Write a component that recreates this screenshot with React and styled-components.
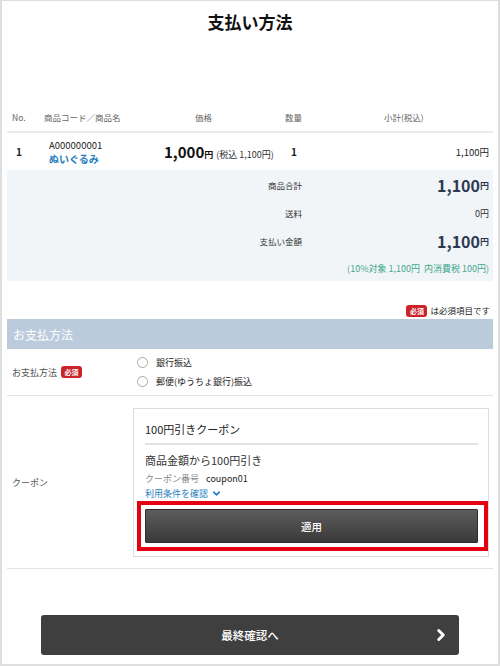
import React from "react";
import styled, { createGlobalStyle } from "styled-components";
import { ChevronDown, ChevronRight } from "lucide-react";

const Global = createGlobalStyle`
  html, body { margin: 0; padding: 0; background: #fff; }
  body { font-family: "Noto Sans CJK JP", "Noto Sans", sans-serif; color: #333; }
  * { box-sizing: border-box; }
`;

const Frame = styled.div`
  width: 500px;
  height: 666px;
  border: 2px solid #dedede;
  border-top-width: 1px;
  background: #fff;
  padding: 0 5px;
  display: flex;
  flex-direction: column;
  overflow: hidden;
`;

const Title = styled.h1`
  margin: 0;
  padding-top: 9px;
  height: 102px;
  text-align: center;
  font-size: 17px;
  line-height: 24px;
  font-weight: 700;
  color: #111;
`;

const TableRow = styled.div`
  display: grid;
  grid-template-columns: 37px 120px 120px 44px 1fr;
  align-items: center;
  height: ${(p) => p.$h}px;
  border-bottom: ${(p) => (p.$line ? "2px solid #ececec" : "none")};
`;

const HeadCell = styled.div`
  font-size: 8.5px;
  color: #666;
  padding-left: ${(p) => p.$pl || 0}px;
  text-align: ${(p) => p.$align || "left"};
  white-space: nowrap;
`;

const Cell = styled.div`
  padding-left: ${(p) => p.$pl || 0}px;
  padding-right: ${(p) => p.$pr || 0}px;
  text-align: ${(p) => p.$align || "left"};
  white-space: nowrap;
  font-size: 9.5px;
  color: #222;
`;

const No = styled.span`
  font-weight: 700;
  font-size: 10px;
  color: #222;
`;

const Code = styled.div`
  font-size: 9.5px;
  line-height: 14px;
  color: #222;
`;

const Name = styled.div`
  font-size: 10px;
  line-height: 14px;
  font-weight: 700;
  color: #1f7fc0;
`;

const BigPrice = styled.span`
  font-size: 15px;
  font-weight: 700;
  color: #111;
`;

const Yen = styled.span`
  font-size: 9px;
  font-weight: 700;
  color: ${(p) => p.$c || "#111"};
`;

const Tax = styled.span`
  font-size: 9px;
  color: #333;
  margin-left: 3px;
`;

const Summary = styled.div`
  background: #f2f5f8;
  padding: 1px 4px 0 0;
  display: grid;
  grid-template-columns: 295px 1fr;
`;

const SumLabel = styled.div`
  height: 28px;
  display: flex;
  align-items: center;
  justify-content: flex-end;
  font-size: 8.5px;
  color: #333;
`;

const SumValue = styled.div`
  height: 28px;
  display: flex;
  align-items: center;
  justify-content: flex-end;
  font-size: ${(p) => (p.$big ? "16px" : "9px")};
  font-weight: ${(p) => (p.$big ? 700 : 400)};
  color: ${(p) => (p.$big ? "#2b3a52" : "#333")};
`;

const Note = styled.div`
  grid-column: 1 / 3;
  height: 26px;
  display: flex;
  align-items: center;
  justify-content: flex-end;
  font-size: 9px;
  color: #3fa88c;
`;

const RequiredNote = styled.div`
  height: 37px;
  display: flex;
  align-items: flex-end;
  justify-content: flex-end;
  gap: 3px;
  padding: 0 3px 1px 0;
  font-size: 8.5px;
  line-height: 13px;
  color: #222;
`;

const Badge = styled.span`
  display: inline-flex;
  align-items: center;
  justify-content: center;
  width: 21px;
  height: 12px;
  border-radius: 3px;
  background: #cc2229;
  color: #fff;
  font-size: 7px;
  font-weight: 700;
  margin-left: ${(p) => p.$ml || 0}px;
`;

const SectionHead = styled.div`
  height: 30px;
  background: #bccbdc;
  color: #fff;
  font-size: 12px;
  display: flex;
  align-items: center;
  padding-left: 6px;
  margin-top: 1px;
`;

const FormRow = styled.div`
  display: grid;
  grid-template-columns: ${(p) => p.$label}px 1fr;
  align-items: center;
  padding: ${(p) => p.$pad};
  border-bottom: 1px solid #e3e3e3;
`;

const FormLabel = styled.div`
  font-size: 9px;
  color: #555;
  padding-left: 5px;
  display: flex;
  align-items: center;
`;

const RadioList = styled.div`
  display: flex;
  flex-direction: column;
`;

const RadioItem = styled.label`
  height: 19px;
  display: flex;
  align-items: center;
  gap: 8px;
  font-size: 9px;
  color: #222;
`;

const RadioCircle = styled.span`
  width: 11px;
  height: 11px;
  border-radius: 50%;
  border: 1px solid #a8a8a8;
  background: #fff;
`;

const CouponBox = styled.div`
  border: 1px solid #dcdcdc;
  padding: 11px 10px 13px 11px;
  margin-right: 4px;
`;

const CouponTitle = styled.div`
  font-size: 11px;
  line-height: 18px;
  color: #222;
  padding-bottom: 5px;
  border-bottom: 2px solid #e3e3e3;
`;

const CouponDesc = styled.div`
  font-size: 11px;
  line-height: 18px;
  color: #333;
  margin-top: 6px;
`;

const CouponMeta = styled.div`
  font-size: 9px;
  line-height: 15px;
  margin-top: 2px;
  color: #888;
  & b { font-weight: 400; color: #222; margin-left: 7px; }
`;

const TermsLink = styled.div`
  font-size: 9px;
  line-height: 15px;
  color: #1f7fc0;
  display: flex;
  align-items: center;
  gap: 3px;
`;

const ApplyWrap = styled.div`
  position: relative;
  margin-top: 8px;
`;

const Highlight = styled.div`
  position: absolute;
  top: -8px;
  bottom: -8px;
  left: -8px;
  right: -10px;
  border: 4px solid #e50012;
  pointer-events: none;
`;

const ApplyButton = styled.button`
  width: 100%;
  height: 34px;
  border: 1px solid #2e2e2e;
  border-radius: 1px;
  background: linear-gradient(180deg, #5c5c5c 0%, #3a3a3a 100%);
  color: #fff;
  font-family: inherit;
  font-size: 10.5px;
  font-weight: 500;
  display: block;
`;

const Footer = styled.div`
  padding-top: 46px;
  display: flex;
  justify-content: center;
`;

const NextButton = styled.button`
  position: relative;
  width: 418px;
  height: 40px;
  border: none;
  border-radius: 3px;
  background: #3f3f3f;
  color: #fff;
  font-family: inherit;
  font-size: 11.5px;
  font-weight: 500;
  display: flex;
  align-items: center;
  justify-content: center;
`;

const NextArrow = styled.span`
  position: absolute;
  right: 9px;
  top: 50%;
  transform: translateY(-50%);
  display: flex;
`;

export default function App() {
  return (
    <>
      <Global />
      <Frame>
        <Title>支払い方法</Title>

        <TableRow $h={30} $line>
          <HeadCell $pl={5}>No.</HeadCell>
          <HeadCell>商品コード／商品名</HeadCell>
          <HeadCell $pl={31}>価格</HeadCell>
          <HeadCell $pl={1}>数量</HeadCell>
          <HeadCell $pl={56}>小計(税込)</HeadCell>
        </TableRow>
        <TableRow $h={37}>
          <Cell $pl={9}><No>1</No></Cell>
          <Cell $pl={5}>
            <Code>A000000001</Code>
            <Name>ぬいぐるみ</Name>
          </Cell>
          <Cell>
            <BigPrice>1,000</BigPrice>
            <Yen>円</Yen>
            <Tax>(税込 1,100円)</Tax>
          </Cell>
          <Cell $pl={7}><No>1</No></Cell>
          <Cell $align="right" $pr={4}>1,100円</Cell>
        </TableRow>

        <Summary>
          <SumLabel>商品合計</SumLabel>
          <SumValue $big>1,100<Yen $c="#2b3a52">円</Yen></SumValue>
          <SumLabel>送料</SumLabel>
          <SumValue>0円</SumValue>
          <SumLabel>支払い金額</SumLabel>
          <SumValue $big>1,100<Yen $c="#2b3a52">円</Yen></SumValue>
          <Note>(10%対象 1,100円&nbsp;&nbsp;内消費税 100円)</Note>
        </Summary>

        <RequiredNote>
          <Badge>必須</Badge>
          <span>は必須項目です</span>
        </RequiredNote>

        <SectionHead>お支払方法</SectionHead>

        <FormRow $label={130} $pad="4px 0 4px">
          <FormLabel>
            お支払方法<Badge $ml={4}>必須</Badge>
          </FormLabel>
          <RadioList>
            <RadioItem><RadioCircle />銀行振込</RadioItem>
            <RadioItem><RadioCircle />郵便(ゆうちょ銀行)振込</RadioItem>
          </RadioList>
        </FormRow>

        <FormRow $label={126} $pad="12px 0 11px">
          <FormLabel>クーポン</FormLabel>
          <CouponBox>
            <CouponTitle>100円引きクーポン</CouponTitle>
            <CouponDesc>商品金額から100円引き</CouponDesc>
            <CouponMeta>クーポン番号<b>coupon01</b></CouponMeta>
            <TermsLink>
              利用条件を確認
              <ChevronDown size={11} strokeWidth={3.5} />
            </TermsLink>
            <ApplyWrap>
              <ApplyButton>適用</ApplyButton>
              <Highlight />
            </ApplyWrap>
          </CouponBox>
        </FormRow>

        <Footer>
          <NextButton>
            最終確認へ
            <NextArrow>
              <ChevronRight size={18} strokeWidth={4} />
            </NextArrow>
          </NextButton>
        </Footer>
      </Frame>
    </>
  );
}
